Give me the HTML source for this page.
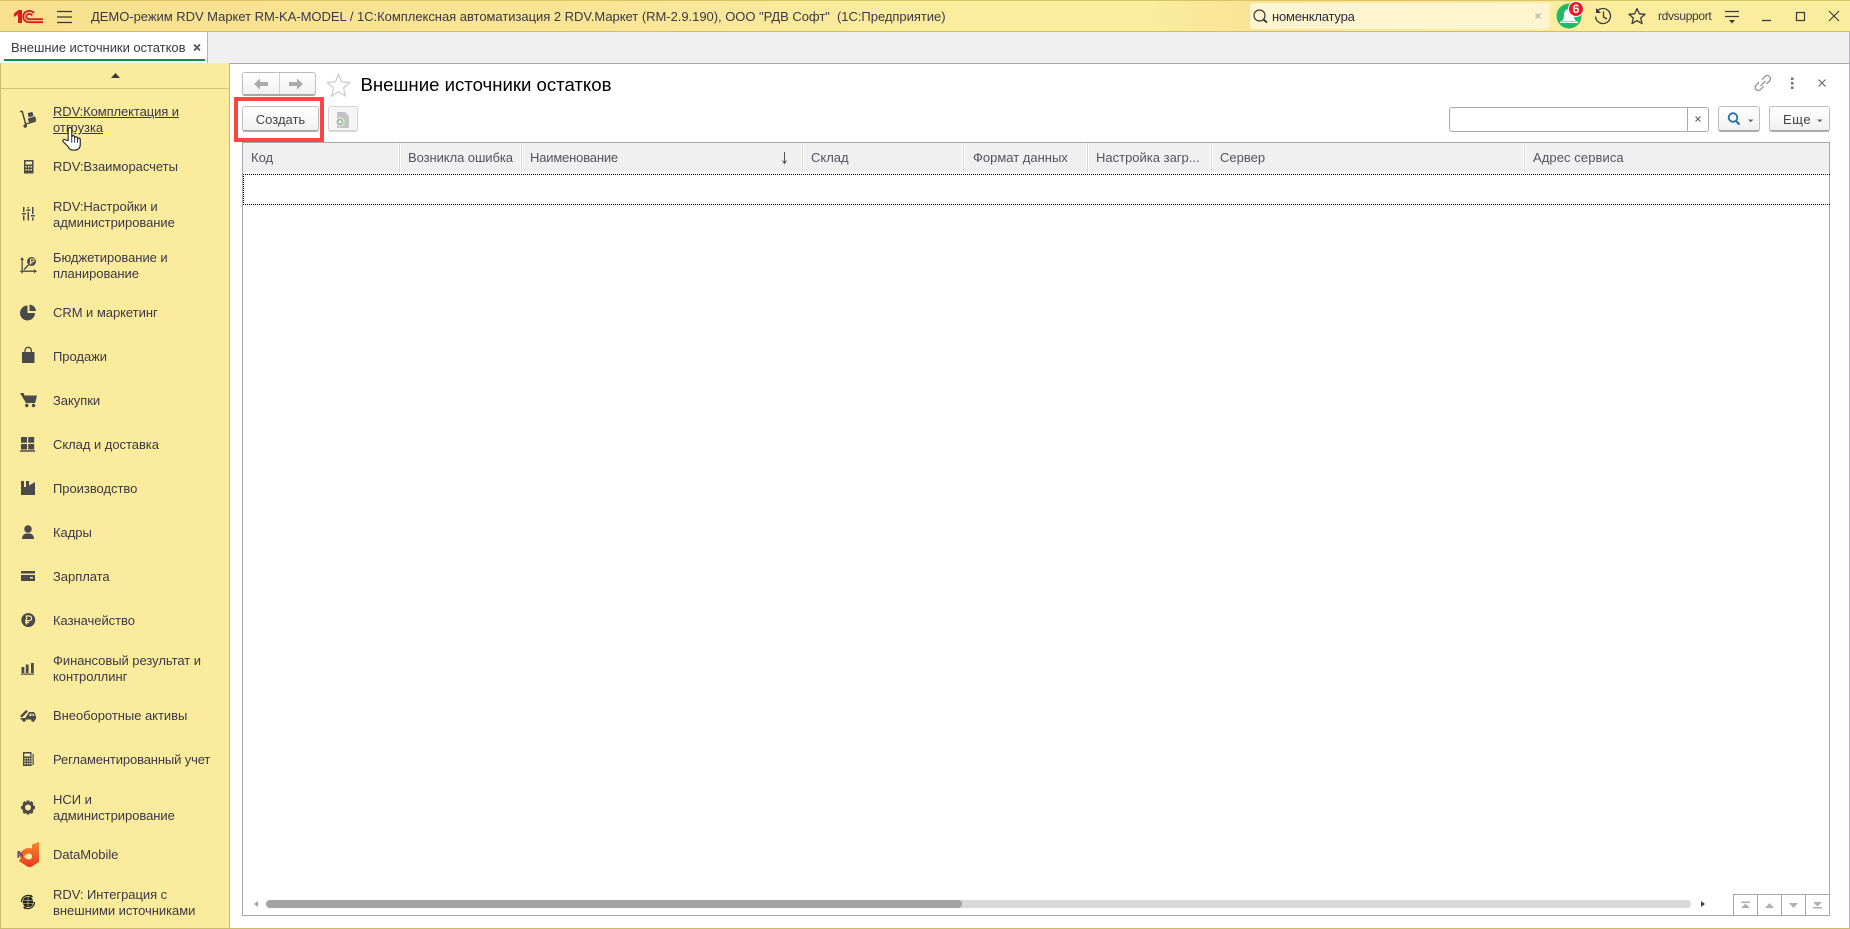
<!DOCTYPE html>
<html lang="ru"><head><meta charset="utf-8"><title>Внешние источники остатков</title>
<style>
html,body{margin:0;padding:0;width:1850px;height:929px;overflow:hidden;background:#fff}
body{position:relative;font-family:"Liberation Sans",Arial,sans-serif;font-size:13px;color:#3c3848}
div{position:absolute;box-sizing:border-box}
.t{white-space:nowrap;line-height:16px;height:16px}
.m{left:53px;letter-spacing:-.04px}
.h{top:150px;color:#55535f}
.c{top:143px;height:29px;width:1px;background:#d6d6d6;box-shadow:1px 0 0 #fff,-1px 0 0 #fff}
.b{background:linear-gradient(#fff,#f1f1f1);border:1px solid #bdbdbd;border-bottom:2px solid #a9a9a9;border-radius:3px}
svg{position:absolute;left:0;top:0;overflow:visible}
</style></head><body>

<!-- title bar -->
<div style="left:0;top:0;width:1850px;height:32px;background:linear-gradient(90deg,#f7e18f 0,#f8e492 500px,#fbec9e 900px,#fbec9e 1150px,#f9e494 1248px,#fbec9e 1552px);border-top:1px solid #d6c56b;border-bottom:1px solid #cdbd66"></div>
<div class="t" style="left:91px;top:9px;letter-spacing:-.03px">ДЕМО-режим RDV Маркет RM-KA-MODEL / 1С:Комплексная автоматизация 2 RDV.Маркет (RM-2.9.190), ООО "РДВ Софт"&nbsp; (1С:Предприятие)</div>
<div style="left:1250px;top:3px;width:300px;height:26px;background:#fdf5cf;border-radius:3px"></div>
<div class="t" style="left:1272px;top:9px;color:#2c2c3a;letter-spacing:-.2px">номенклатура</div>
<div class="t" style="left:1658px;top:8px;font-size:12px;letter-spacing:-.33px">rdvsupport</div>

<!-- tabs -->
<div style="left:0;top:32px;width:1850px;height:32px;background:#f0f0f0;border-bottom:1px solid #a8a8a8"></div>
<div style="left:0;top:32px;width:208px;height:31px;background:#fff;border-right:1px solid #b5b5b5"></div>
<div style="left:4px;top:59px;width:201px;height:2px;background:#0e8f4a"></div>
<div class="t" style="left:11px;top:40px;letter-spacing:-.04px">Внешние источники остатков</div>

<!-- sidebar -->
<div style="left:0;top:63px;width:230px;height:866px;background:#fbec9d;border-left:1px solid #cbbb68;border-right:1px solid #cbbb68;border-bottom:1px solid #cbbb68"></div>
<div style="left:1px;top:88px;width:228px;height:1px;background:#d3c372"></div>
<div style="left:229px;top:928px;width:1621px;height:1px;background:#cbbb68"></div>
<div style="left:1849px;top:32px;width:1px;height:897px;background:#cbbb68"></div>

<div class="t m" style="top:104px;text-decoration:underline;letter-spacing:-.1px">RDV:Комплектация и</div>
<div class="t m" style="top:120px;text-decoration:underline">отгрузка</div>
<div class="t m" style="top:159px">RDV:Взаиморасчеты</div>
<div class="t m" style="top:199px">RDV:Настройки и</div>
<div class="t m" style="top:215px">администрирование</div>
<div class="t m" style="top:250px">Бюджетирование и</div>
<div class="t m" style="top:266px">планирование</div>
<div class="t m" style="top:305px">CRM и маркетинг</div>
<div class="t m" style="top:349px">Продажи</div>
<div class="t m" style="top:393px">Закупки</div>
<div class="t m" style="top:437px">Склад и доставка</div>
<div class="t m" style="top:481px">Производство</div>
<div class="t m" style="top:525px">Кадры</div>
<div class="t m" style="top:569px">Зарплата</div>
<div class="t m" style="top:613px">Казначейство</div>
<div class="t m" style="top:653px">Финансовый результат и</div>
<div class="t m" style="top:669px">контроллинг</div>
<div class="t m" style="top:708px">Внеоборотные активы</div>
<div class="t m" style="top:752px;letter-spacing:-.13px">Регламентированный учет</div>
<div class="t m" style="top:792px">НСИ и</div>
<div class="t m" style="top:808px">администрирование</div>
<div class="t m" style="top:847px">DataMobile</div>
<div class="t m" style="top:887px">RDV: Интеграция с</div>
<div class="t m" style="top:903px">внешними источниками</div>

<!-- form header -->
<div class="b" style="left:242px;top:72px;width:74px;height:24px"></div>
<div style="left:279px;top:73px;width:1px;height:21px;background:#d0d0d0"></div>
<div class="t" style="left:360.5px;top:75px;font-size:18.6px;line-height:20px;height:20px;color:#000">Внешние источники остатков</div>

<!-- red highlight -->
<div style="left:234px;top:97px;width:90px;height:45px;border:4px solid #ff4444"></div>
<div class="b" style="left:242px;top:106px;width:77px;height:26px"></div>
<div class="t" style="left:242px;top:112px;width:77px;text-align:center;color:#444">Создать</div>
<div class="b" style="left:328px;top:106px;width:30px;height:26px;background:#f5f5f5;border-color:#d4d4d4"></div>

<!-- search -->
<div style="left:1449px;top:107px;width:260px;height:25px;background:#fff;border:1px solid #aaa;border-radius:3px"></div>
<div style="left:1687px;top:108px;width:1px;height:23px;background:#aaa"></div>
<div class="b" style="left:1718px;top:106px;width:42px;height:26px"></div>
<div class="b" style="left:1769px;top:106px;width:61px;height:26px"></div>
<div class="t" style="left:1783px;top:112px;color:#444;letter-spacing:.6px">Еще</div>

<!-- table -->
<div style="left:242px;top:142px;width:1588px;height:774px;background:#fff;border:1px solid #a8a8a8"></div>
<div style="left:243px;top:143px;width:1586px;height:29px;background:#f0f0f0"></div>
<div class="c" style="left:399px"></div><div class="c" style="left:521px"></div><div class="c" style="left:802px"></div><div class="c" style="left:963px"></div><div class="c" style="left:1087px"></div><div class="c" style="left:1211px"></div><div class="c" style="left:1524px"></div>
<div class="t h" style="left:251px">Код</div>
<div class="t h" style="left:408px;letter-spacing:-.07px">Возникла ошибка</div>
<div class="t h" style="left:530px;letter-spacing:-.18px">Наименование</div>
<div class="t h" style="left:811px">Склад</div>
<div class="t h" style="left:973px">Формат данных</div>
<div class="t h" style="left:1096px">Настройка загр...</div>
<div class="t h" style="left:1220px">Сервер</div>
<div class="t h" style="left:1533px;letter-spacing:.08px">Адрес сервиса</div>
<div style="left:243px;top:174px;width:1587px;height:31px;border:1px dotted #000;border-right:none"></div>

<!-- scrollbar -->
<div style="left:266px;top:900px;width:1425px;height:8px;background:#d9d9d9;border-radius:4px"></div>
<div style="left:266px;top:900px;width:696px;height:8px;background:#a3a3a3;border-radius:4px"></div>
<div style="left:1733px;top:894px;width:97px;height:22px;border:1px solid #a8a8a8"></div>
<div style="left:1757px;top:894px;width:1px;height:22px;background:#a8a8a8"></div>
<div style="left:1781px;top:894px;width:1px;height:22px;background:#a8a8a8"></div>
<div style="left:1805px;top:894px;width:1px;height:22px;background:#a8a8a8"></div>

<svg width="1850" height="929" viewBox="0 0 1850 929" xmlns="http://www.w3.org/2000/svg">
<!-- 1C logo -->
<g transform="translate(14,10)">
<path d="M0 3.500 L4.500 0 H8 V13 H4 V4.500 L0 7z" fill="#d6201f"/>
<g fill="none" stroke="#d6201f" stroke-width="1.900">
<path d="M20 3 C18.500 1.200 16.800 .9 15.300 .9 C11.800 .9 9.300 3.200 9.300 6.600 C9.300 10 11.800 12.200 15.300 12.200 H29"/>
<path d="M18.300 5.400 C17.500 4.400 16.400 3.900 15.300 3.900 C13.500 3.900 12.300 5 12.300 6.600 C12.300 8.200 13.500 9.200 15.300 9.200 H29"/>
</g></g>
<path d="M57 11.500H72M57 17H72M57 22.500H72" stroke="#3a3a3a" stroke-width="1.200"/>
<!-- tab close -->
<path d="M194 44.500l6 6m0-6l-6 6" stroke="#555" stroke-width="1.800"/>
<!-- top search icon -->
<circle cx="1259.500" cy="15.500" r="5.500" fill="none" stroke="#3a3a3a" stroke-width="1.200"/>
<path d="M1263.500 19.500l3.500 3" stroke="#3a3a3a" stroke-width="2"/>
<path d="M1535.500 13.500l5 5m0-5l-5 5" stroke="#aaa" stroke-width="1.200"/>
<!-- bell -->
<circle cx="1569" cy="16" r="12.500" fill="#1fba6a"/>
<path d="M1562 21c2-2 2-4 2-7a5 5 0 0 1 10 0c0 3 0 5 2 7z" fill="#fff"/>
<path d="M1560 21.500h18v1.500h-18z" fill="#fff"/>
<circle cx="1576" cy="9" r="7.500" fill="#ee1c25" stroke="#fff" stroke-width="1"/>
<text x="1576" y="13" font-family="Liberation Sans,sans-serif" font-size="12" font-weight="700" fill="#fff" text-anchor="middle">6</text>
<!-- history -->
<path d="M1597 11.500a7.500 7.500 0 1 1-1.500 5" fill="none" stroke="#3a3a3a" stroke-width="1.300"/>
<path d="M1596 8v5h5z" fill="#3a3a3a"/>
<path d="M1603.500 11.500v5.500l3.500 2" fill="none" stroke="#3a3a3a" stroke-width="1.300"/>
<!-- star top -->
<path d="M1637 8.500l2.300 5.300 5.700.5-4.300 3.700 1.300 5.600-5-3-5 3 1.300-5.600-4.300-3.700 5.700-.5z" fill="none" stroke="#3a3a3a" stroke-width="1.300" stroke-linejoin="round"/>
<!-- menu -->
<path d="M1725 11.500h14M1725 16.500h14" stroke="#3a3a3a" stroke-width="1.200"/>
<path d="M1729 20h6l-3 3.500z" fill="#3a3a3a"/>
<!-- window controls -->
<path d="M1762 20.500h9" stroke="#3a3a3a" stroke-width="1.300"/>
<rect x="1796.500" y="12.500" width="8" height="8" fill="none" stroke="#3a3a3a" stroke-width="1.200"/>
<path d="M1829 11l10 10m0-10l-10 10" stroke="#3a3a3a" stroke-width="1.100"/>
<!-- scroll-up -->
<path d="M111 78l4.500-5 4.500 5z" fill="#3a3a3a"/>

<!-- sidebar icons -->
<g fill="#4a4a4a">
<!-- hand truck with boxes -->
<path d="M20 110.800h2.800l3.400 12.400 9.300-2.900.4 1.400-10.800 3.300-3.400-12.700H20z"/>
<circle cx="25.200" cy="126" r="1.800"/>
<path d="M27.500 113.200l4.800-1.500 1.300 4.200-4.800 1.500zM27.800 118.500l7.300-2.300 1.200 4-7.300 2.300z"/>
<!-- calculator -->
<path fill-rule="evenodd" d="M24 160h9.500v13.500H24zM25.500 161.500v3h6.500v-3zM25.500 166v1.500h1.500V166zM28 166v1.500h1.500V166zM30.500 166v1.500H32V166zM25.500 169v1.500h1.500V169zM28 169v1.500h1.500V169zM30.500 169v1.500H32V169z"/>
<!-- sliders -->
<path d="M23 207h1.500v5H23zM21.800 213h4v1.500h-4zM23 215.500h1.500v5H23zM27.500 207h1.500v1.500h-1.500zM26.300 209.500h4v1.500h-4zM27.500 212h1.500v8.500h-1.500zM32 207h1.500v7h-1.500zM30.800 215h4v1.500h-4zM32 217.500h1.500v3H32z"/>
<!-- budget -->
<path d="M22 257l2 3h-1.200v10.500H34v-1.300l3 2-3 2v-1.300H22.800v1.500h-1.300v-1.500H20v-1.200h1.500V260h-1.300z"/>
<path d="M23.500 269l4.500-4.500 1 1-4.500 4.500z"/>
<circle cx="31.500" cy="261.500" r="4.500"/>
<path d="M30.500 259h2.300a1.300 1.300 0 0 1 0 2.700h-2.300M30.500 259v5.500M29.500 262.900h3" fill="none" stroke="#fbec9d" stroke-width=".9"/>
<!-- pie -->
<path d="M27.500 305.500v7.500h7.500a7.500 7.500 0 1 1-7.500-7.500z"/><path d="M29.500 304.500a7 7 0 0 1 6.500 6.500h-6.500z"/>
<!-- bag -->
<path d="M22 352h12.500v11H22z"/><path d="M25 353v-2.500a3.200 3.200 0 0 1 6.400 0V353" fill="none" stroke="#4a4a4a" stroke-width="1.300"/>
<!-- cart -->
<path d="M20 393h3.500l1 2.500H37l-1.800 7.500H26z"/><circle cx="26.800" cy="405.500" r="1.700"/><circle cx="33.500" cy="405.500" r="1.700"/>
<!-- warehouse -->
<path d="M21 437h6v5.700h-6zM28.200 437h6v5.700h-6zM21 444h6v5.500h-6zM28.200 444h6v5.500h-6zM20 450.300h15v1.400H20z"/>
<!-- factory -->
<path d="M21 481h3v6h2v-6h3v4.500l6-3.500v13H21z"/>
<!-- person -->
<circle cx="28" cy="529" r="3.800"/><path d="M22 539c0-3.500 2-5 4-5.500h4c2 .5 4 2 4 5.500z"/>
<!-- card -->
<path fill-rule="evenodd" d="M21 571h14v10H21zM21 573.500v1.500h14v-1.500zM30 577v1.500h3V577z"/>
<!-- ruble -->
<path fill-rule="evenodd" d="M28.300 613a7 7 0 1 1-.01 0z"/>
<path d="M26.500 624.500V616h2.800a2.300 2.300 0 0 1 0 4.600h-4.300M25 622.500h4" fill="none" stroke="#fbec9d" stroke-width="1.300"/>
<!-- bars -->
<path d="M21.500 667h2.800v6h-2.800zM25.800 664.500h2.800v8.500h-2.800zM31 663h2.800v10H31zM21 673.500h13v1.200H21z"/>
<!-- truck -->
<path d="M20 716l6-6 2 1.500-6 6zM26 717l3-5h5l2 4v3.500H20.500v-1.500h5z"/><path d="M30 713.500h1.500V716h-2.500zM32.500 713.500h.8l1.200 2.500h-2z" fill="#fbec9d"/><circle cx="24" cy="720" r="1.800"/><circle cx="33" cy="720" r="1.800"/>
<!-- calc 2 -->
<path fill-rule="evenodd" d="M23 752h8.500v14H23zM24.300 753.500v3h6v-3zM24.300 758v1.300h1.500V758zM26.800 758v1.300h1.500V758zM29 758v1.300h1.300V758zM24.300 760.500v1.300h1.500v-1.300zM26.800 760.500v1.300h1.500v-1.300zM29 760.500v1.300h1.300v-1.300zM24.300 763v1.300h1.500V763zM26.800 763v1.300h1.500V763zM29 763v1.300h1.300V763z"/>
<path d="M32.500 754h1.200v11h-1.200z"/>
<!-- gear -->
<circle cx="28" cy="807.500" r="4.500" fill="none" stroke="#4a4a4a" stroke-width="3"/>
<path d="M26.500 800.500h3v2.500h-3zM26.500 812h3v2.500h-3zM21 806h2.500v3H21zM32.500 806H35v3h-2.500z"/>
<path d="M22.500 803l2-2 2 2-2 2zM29.500 803l2-2 2 2-2 2zM22.500 812l2 2 2-2-2-2zM29.500 812l2 2 2-2-2-2z"/>
</g>
<!-- DataMobile -->
<defs><linearGradient id="dm" x1="0" y1="0" x2="0" y2="1"><stop offset="0" stop-color="#f58a2c"/><stop offset="1" stop-color="#e8371f"/></linearGradient></defs>
<path fill-rule="evenodd" fill="url(#dm)" d="M39 842v20l-8 5h-3l-9-6 2-3-3-3 4-4c3-3 7-3.500 10-2.500v-4zM29 853.500c-2 0-4 1.500-5 3 1 1.500 3 3 5 3s3-1.300 3-3-1-3-3-3z"/>
<path d="M17.500 851v7h1.500v-5l3 4 1-1.500-3.500-4.500z" fill="#5a4a7a"/>
<!-- sync globe -->
<circle cx="28" cy="902" r="5.300" fill="#222"/>
<path d="M23 900.500h10M23 903.500h10M28 897v10" stroke="#fbec9d" stroke-width=".6"/>
<path d="M21.500 902a6.500 6.500 0 0 1 10-5.500M34.500 902a6.500 6.500 0 0 1-10 5.500" fill="none" stroke="#222" stroke-width="1.200"/>
<path d="M31 894.500l2 2.500-3 .8zM25 909.500l-2-2.500 3-.8z" fill="#222"/>

<!-- hand cursor -->
<g transform="translate(62,126) scale(1.12)">
<path d="M5.500 13V3a1.600 1.600 0 0 1 3.200 0V10a1.300 1.300 0 0 1 2.600 0V11a1.300 1.300 0 0 1 2.600 0V12a1.200 1.200 0 0 1 2.400 0v4.500c0 3-1.800 5-4.300 5H9.500c-2 0-3-1-4-3L1 14c-1-1.500 1-2.800 2.300-1.500z" fill="#fff" stroke="#222" stroke-width="1"/>
<path d="M8.700 10v5M11.300 11v4M13.900 12v3" stroke="#222" stroke-width=".8"/>
</g>

<!-- nav arrows -->
<path d="M254 84l6-5.500v3.500h8v4h-8v3.500z" fill="#aaa"/>
<path d="M303 84l-6-5.500v3.500h-8v4h8v3.500z" fill="#aaa"/>
<!-- big star -->
<path d="M338.500 74l3 7.800 8.500.7-6.500 5.400 2.100 8.300-7.100-4.500-7.100 4.500 2.100-8.300-6.500-5.400 8.500-.7z" fill="#fff" stroke="#cfcfcf" stroke-width="1.300" stroke-linejoin="round"/>
<!-- disabled doc -->
<path d="M337 112h8l4 4v12h-12z" fill="#c2c4c2"/>
<circle cx="340" cy="122" r="4" fill="#9dbb9f" stroke="#f5f5f5"/>
<path d="M338 122h4M340 120v4" stroke="#fff" stroke-width="1"/>
<!-- form right icons -->
<path d="M1762 79.500l3-3a3.100 3.100 0 0 1 4.500 4.400l-3 3M1763.500 86.500l-3 3a3.100 3.100 0 0 1-4.500-4.400l3-3M1760.500 86l5-5" fill="none" stroke="#888" stroke-width="1.200"/>
<path d="M1791 77.500h2.500V80H1791zM1791 82h2.500v2.500H1791zM1791 86.500h2.500V89H1791z" fill="#707070"/>
<path d="M1818.500 79.500l7 7m0-7l-7 7" stroke="#666" stroke-width="1.100"/>
<!-- search controls -->
<path d="M1695.500 116.500l5 5m0-5l-5 5" stroke="#666" stroke-width="1.200"/>
<circle cx="1733" cy="117.500" r="4.300" fill="none" stroke="#2a6fa8" stroke-width="1.800"/>
<path d="M1736 121l3.500 3.500" stroke="#2a6fa8" stroke-width="2.200"/>
<path d="M1748 119.500h5.500l-2.750 2.800z" fill="#666"/>
<path d="M1817 119.500h5.500l-2.750 2.800z" fill="#666"/>
<!-- sort arrow -->
<path d="M784.500 152v11M782.500 160.500l2 3 2-3" fill="none" stroke="#444" stroke-width=".9"/>
<!-- scroll arrows -->
<path d="M258 901v6l-4-3z" fill="#a0a0a0"/><path d="M1701 901v6l4-3z" fill="#444"/>
<!-- bottom nav -->
<g fill="#b0b0b0">
<path d="M1741 901.500h9v1.500h-9zM1745.500 903.500l4.500 4.500h-9z"/>
<path d="M1765 908l4.500-5 4.500 5z"/>
<path d="M1789 903l4.500 5 4.500-5z"/>
<path d="M1813 902l4.500 4.500 4.500-4.500zM1813 907h9v1.500h-9z"/>
</g>
</svg>
</body></html>
